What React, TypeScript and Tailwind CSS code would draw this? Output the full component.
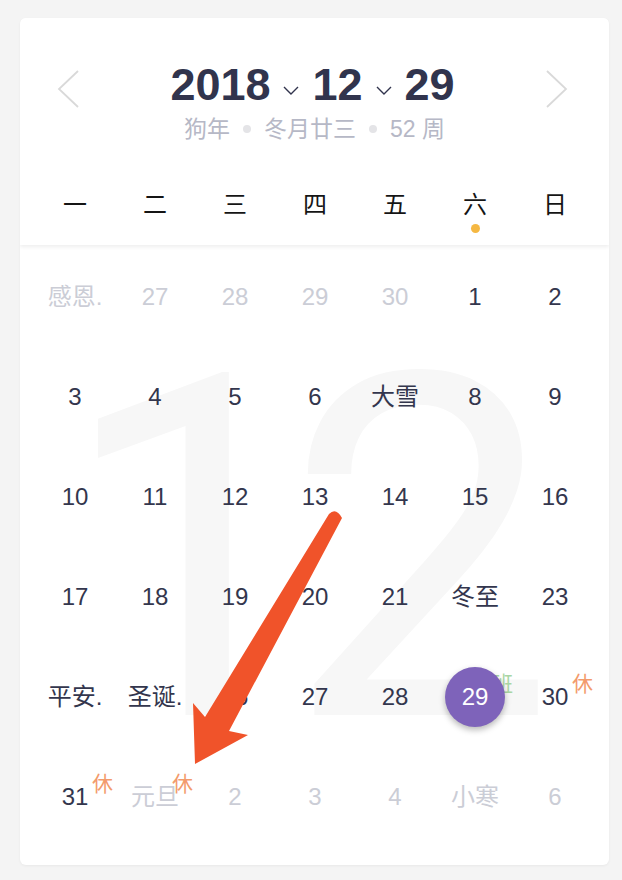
type Day = {
  text: string
  muted?: boolean
  badge?: "休" | "班"
  selected?: boolean
}

const weekdays = ["一", "二", "三", "四", "五", "六", "日"]

const rows: Day[][] = [
  [
    { text: "感恩.", muted: true },
    { text: "27", muted: true },
    { text: "28", muted: true },
    { text: "29", muted: true },
    { text: "30", muted: true },
    { text: "1" },
    { text: "2" },
  ],
  [
    { text: "3" },
    { text: "4" },
    { text: "5" },
    { text: "6" },
    { text: "大雪" },
    { text: "8" },
    { text: "9" },
  ],
  [
    { text: "10" },
    { text: "11" },
    { text: "12" },
    { text: "13" },
    { text: "14" },
    { text: "15" },
    { text: "16" },
  ],
  [
    { text: "17" },
    { text: "18" },
    { text: "19" },
    { text: "20" },
    { text: "21" },
    { text: "冬至" },
    { text: "23" },
  ],
  [
    { text: "平安." },
    { text: "圣诞." },
    { text: "26" },
    { text: "27" },
    { text: "28" },
    { text: "29", selected: true, badge: "班" },
    { text: "30", badge: "休" },
  ],
  [
    { text: "31", badge: "休" },
    { text: "元旦", muted: true, badge: "休" },
    { text: "2", muted: true },
    { text: "3", muted: true },
    { text: "4", muted: true },
    { text: "小寒", muted: true },
    { text: "6", muted: true },
  ],
]

const font = { fontFamily: '"Liberation Sans", "Noto Sans CJK SC", sans-serif' }

const Chevron = () => (
  <svg width="16" height="9" viewBox="0 0 16 9" className="mt-[12px]" fill="none" stroke="#31344d" strokeWidth="1.4">
    <path d="M1 1l7 7 7-7" />
  </svg>
)

const Cell = ({ day }: { day: Day }) => {
  return (
    <div className="relative flex h-[100px] items-center justify-center">
      {day.badge && (
        <span
          className={
            "absolute left-[calc(50%+17px)] top-[26px] text-[21px] leading-none " +
            (day.badge === "休" ? "text-[#f39b6c]" : "text-[#a9d6a4]")
          }
        >
          {day.badge}
        </span>
      )}
      {day.selected ? (
        <div className="relative flex h-[60px] w-[60px] items-center justify-center rounded-full bg-[#7e63ba] text-[24px] text-white shadow-[0_3px_6px_rgba(0,0,0,0.28)]">
          {day.text}
        </div>
      ) : (
        <span className={"text-[24px] leading-[32px] " + (day.muted ? "text-[#cbcdd6]" : "text-[#33364d]")}>
          {day.text}
        </span>
      )}
    </div>
  )
}

export default function App() {
  return (
    <div className="relative h-[880px] w-[622px] bg-[#f4f4f4] pt-[18px]" style={font}>
      <div className="ml-[20px] h-[847px] w-[589px] overflow-hidden rounded-md bg-white shadow-[0_1px_3px_rgba(0,0,0,0.05)]">
        {/* header */}
        <div className="relative z-10 h-[227px] bg-white pt-[44px] shadow-[0_2px_4px_rgba(0,0,0,0.07)]">
          <div className="flex h-[45px] items-center justify-between pl-[37px] pr-[41px]">
            <svg width="22" height="38" viewBox="0 0 22 38" className="mt-[8px]" fill="none" stroke="#d9d9d9" strokeWidth="1.8">
              <path d="M21 1L2 19l19 18" />
            </svg>
            <div className="flex items-center gap-[13px] text-[45px] font-bold leading-none text-[#31344d]">
              <span>2018</span>
              <Chevron />
              <span>12</span>
              <Chevron />
              <span>29</span>
            </div>
            <svg width="22" height="38" viewBox="0 0 22 38" className="mt-[8px]" fill="none" stroke="#d9d9d9" strokeWidth="1.8">
              <path d="M1 1l19 18L1 37" />
            </svg>
          </div>
          <div className="mt-2 flex items-center justify-center gap-[13px] text-[23px] leading-[28px] text-[#b6b8c6]">
            <span>狗年</span>
            <span className="h-[8px] w-[8px] rounded-full bg-[#e4e4e7]" />
            <span>冬月廿三</span>
            <span className="h-[8px] w-[8px] rounded-full bg-[#e4e4e7]" />
            <span>52 周</span>
          </div>
          <div className="ml-[15px] mt-[46px] grid w-[560px] grid-cols-7">
            {weekdays.map((w) => (
              <div key={w} className="relative flex justify-center text-[24px] leading-[32px] text-[#151515]">
                {w}
                {w === "六" && (
                  <span className="absolute left-[calc(50%-4px)] top-[35px] h-[9px] w-[9px] rounded-full bg-[#f5b843]" />
                )}
              </div>
            ))}
          </div>
        </div>

        {/* days */}
        <div className="relative pt-[2px]">
          <div className="absolute left-[38px] top-[66px] select-none font-['Roboto'] text-[480px] leading-none tracking-[-42px] text-[#f7f7f7]">
            12
          </div>
          <div className="relative ml-[15px] grid w-[560px] grid-cols-7">
            {rows.flat().map((d, i) => (
              <Cell key={i} day={d} />
            ))}
          </div>
        </div>
      </div>

      {/* annotation arrow */}
      <svg className="pointer-events-none absolute left-0 top-0" width="622" height="880" viewBox="0 0 622 880">
        <path
          d="M329 514 Q336 507 342 518 L229 731 L248 735 L195 764 L193 703 L205 717 Z"
          fill="#f0532a"
        />
      </svg>
    </div>
  )
}
